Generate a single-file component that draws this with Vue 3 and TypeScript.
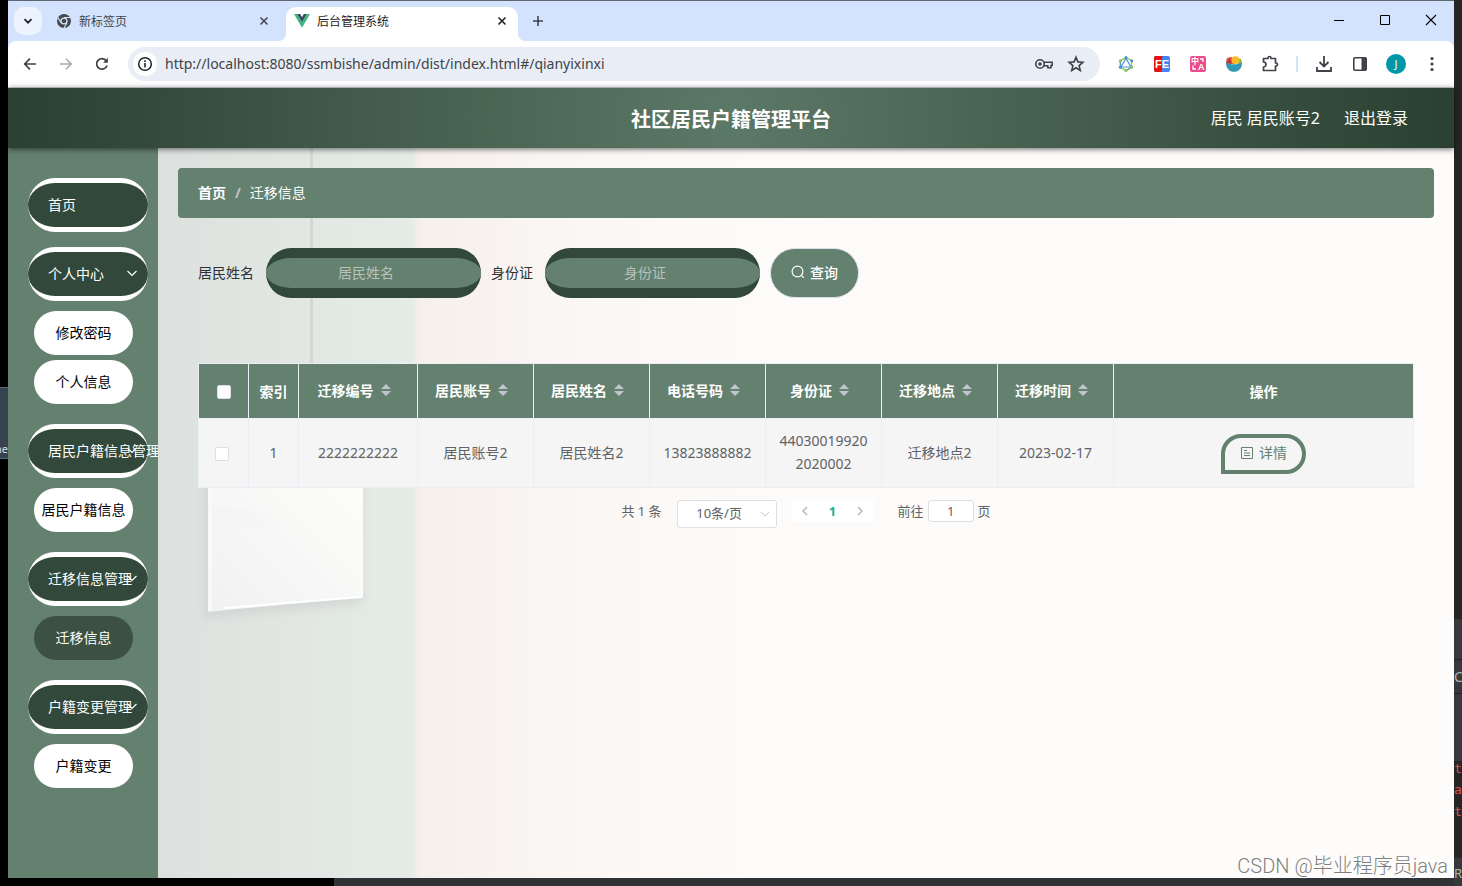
<script setup lang="ts">
import { ref } from 'vue'

interface MenuGroup {
  title: string
  children: string[]
}

interface Column {
  key: string
  label: string
}

const groups: MenuGroup[] = [
  { title: '个人中心', children: ['修改密码', '个人信息'] },
  { title: '居民户籍信息管理', children: ['居民户籍信息'] },
  { title: '迁移信息管理', children: ['迁移信息'] },
  { title: '户籍变更管理', children: ['户籍变更'] },
]
const active = ref('迁移信息')

const columns: Column[] = [
  { key: 'code', label: '迁移编号' },
  { key: 'account', label: '居民账号' },
  { key: 'name', label: '居民姓名' },
  { key: 'phone', label: '电话号码' },
  { key: 'idCard', label: '身份证' },
  { key: 'place', label: '迁移地点' },
  { key: 'date', label: '迁移时间' },
]

const rows: Record<string, string>[] = [
  {
    code: '2222222222',
    account: '居民账号2',
    name: '居民姓名2',
    phone: '13823888882',
    idCard: '440300199202020002',
    place: '迁移地点2',
    date: '2023-02-17',
  },
]

const url = ref('http://localhost:8080/ssmbishe/admin/dist/index.html#/qianyixinxi')
const nameQuery = ref('')
const idQuery = ref('')
const page = ref('1')
</script>

<template>
  <div class="desktop">
    <div class="behind-left" aria-hidden="true"><span class="peek">ne</span></div>

    <div class="window">
      <div class="tabstrip">
        <button class="tab-search" aria-label="搜索标签页">
          <svg width="10" height="10" viewBox="0 0 10 10"><path d="M1.500 3.200 5 6.700l3.500-3.500" fill="none" stroke="#1f2328" stroke-width="1.800" /></svg>
        </button>
        <div class="tab">
          <svg width="16" height="16" viewBox="0 0 16 16">
            <circle cx="8" cy="8" r="7" fill="#45494d" />
            <circle cx="8" cy="8" r="3.600" fill="#d3e3fd" />
            <circle cx="8" cy="8" r="2.300" fill="#45494d" />
            <path d="M8 4.500h6.200M5 9.800 1.900 4.600M11 9.700 8 15" stroke="#d3e3fd" stroke-width="1.100" />
          </svg>
          <span class="tab-title">新标签页</span>
          <button class="tab-close" aria-label="关闭">
            <svg width="10" height="10" viewBox="0 0 10 10"><path d="m1.500 1.500 7 7m0-7-7 7" stroke="#3f4347" stroke-width="1.500" /></svg>
          </button>
        </div>
        <div class="tab current">
          <svg width="16" height="16" viewBox="0 0 16 16">
            <path d="M0 1h3.200L8 9.300 12.800 1H16L8 14.800z" fill="#41b883" />
            <path d="M3.200 1H6.200L8 4.200 9.800 1h3L8 9.300z" fill="#35495e" />
          </svg>
          <span class="tab-title">后台管理系统</span>
          <button class="tab-close" aria-label="关闭">
            <svg width="10" height="10" viewBox="0 0 10 10"><path d="m1.500 1.500 7 7m0-7-7 7" stroke="#1f2328" stroke-width="1.600" /></svg>
          </button>
        </div>
        <button class="new-tab" aria-label="新标签页">
          <svg width="12" height="12" viewBox="0 0 12 12"><path d="M6 1v10M1 6h10" stroke="#3f4347" stroke-width="1.600" /></svg>
        </button>
        <div class="win-controls">
          <button aria-label="最小化"><svg width="12" height="12" viewBox="0 0 12 12"><path d="M1 6.500h10" stroke="#000" /></svg></button>
          <button aria-label="最大化"><svg width="12" height="12" viewBox="0 0 12 12"><path d="M1.500 1.500h9v9h-9z" fill="none" stroke="#000" /></svg></button>
          <button aria-label="关闭窗口"><svg width="12" height="12" viewBox="0 0 12 12"><path d="m1 1 10 10M11 1 1 11" stroke="#000" stroke-width="1.100" /></svg></button>
        </div>
      </div>

      <div class="toolbar">
        <button class="tool" aria-label="后退"><svg width="16" height="16" viewBox="0 0 16 16"><path d="M14 8H3M8 2.700 2.700 8 8 13.300" fill="none" stroke="#3f4347" stroke-width="1.700" /></svg></button>
        <button class="tool" aria-label="前进"><svg width="16" height="16" viewBox="0 0 16 16"><path d="M2 8h11M8 2.700 13.300 8 8 13.300" fill="none" stroke="#a6a9ac" stroke-width="1.500" /></svg></button>
        <button class="tool" aria-label="重新加载"><svg width="16" height="16" viewBox="0 0 16 16"><path d="M13 9.400A5.300 5.300 0 1 1 11.900 4.400L13 5.500" fill="none" stroke="#3f4347" stroke-width="1.700" /><path d="M13.900 1.800v5H9z" fill="#3f4347" /></svg></button>
        <div class="omnibox">
          <span class="site-info"><svg width="16" height="16" viewBox="0 0 16 16"><circle cx="8" cy="8" r="6.300" fill="none" stroke="#1f2328" stroke-width="1.500" /><path d="M8 7v4.500M8 4.300v1.600" stroke="#1f2328" stroke-width="1.600" /></svg></span>
          <input v-model="url" class="url" aria-label="地址" type="text" />
          <button class="omni-btn" aria-label="密码">
            <svg width="18" height="12" viewBox="0 0 18 12"><circle cx="5" cy="6" r="4.200" fill="none" stroke="#3f4347" stroke-width="1.600" /><circle cx="5" cy="6" r="1.800" fill="#3f4347" /><path d="M9 4.200h8.200v3.300H16v2.300h-3.200V7.700H9" fill="none" stroke="#3f4347" stroke-width="1.500" /></svg>
          </button>
          <button class="omni-btn" aria-label="收藏">
            <svg width="18" height="18" viewBox="0 0 18 18"><path d="m9 2.200 1.900 4.700 5 .4-3.800 3.300 1.200 4.900L9 12.800l-4.300 2.700 1.200-4.900-3.800-3.300 5-.4z" fill="none" stroke="#3f4347" stroke-width="1.600" /></svg>
          </button>
        </div>
        <div class="extensions">
          <button class="tool" aria-label="GraphQL">
            <svg width="16" height="16" viewBox="0 0 16 16"><path d="m8 1.500 5.700 3.200v6.600L8 14.500l-5.700-3.200V4.700z" fill="none" stroke="#8cc152" stroke-width="1.200" /><path d="m8 2.500 5 8.500H3z" fill="none" stroke="#4a90d9" stroke-width="1.200" /><path d="M2.300 4.700v6.600M8 14.500l5.700-3.200" stroke="#4a90d9" /><g fill="#4a90d9"><circle cx="8" cy="1.600" r="1.500" /><circle cx="13.700" cy="4.700" r="1.500" /><circle cx="2.300" cy="11.300" r="1.500" /></g><g fill="#8cc152"><circle cx="2.300" cy="4.700" r="1.500" /><circle cx="13.700" cy="11.300" r="1.500" /><circle cx="8" cy="14.400" r="1.500" /></g></svg>
          </button>
          <button class="tool" aria-label="FeHelper">
            <svg width="16" height="16" viewBox="0 0 16 16"><rect width="16" height="16" rx="2" fill="#4285f4" /><path d="M2 0h6.500l-1.200 6 1.200 4-1 6H2a2 2 0 0 1-2-2V2a2 2 0 0 1 2-2z" fill="#eb1010" /><text x="8" y="12" text-anchor="middle" font-family="Liberation Sans" font-weight="700" font-size="11" fill="#fff">FE</text></svg>
          </button>
          <button class="tool" aria-label="翻译">
            <svg width="16" height="16" viewBox="0 0 16 16"><rect width="16" height="16" rx="2" fill="#ea4c89" /><text x="1" y="8" font-family="Noto Sans CJK SC" font-weight="700" font-size="8" fill="#fff">中</text><text x="8" y="14" font-family="Liberation Sans" font-weight="700" font-size="9" fill="#fff">A</text><path d="M10 3h3v3M3 9.500v3.500h3" fill="none" stroke="#fff" stroke-width="1.300" /></svg>
          </button>
          <button class="tool" aria-label="扩展">
            <svg width="16" height="16" viewBox="0 0 16 16"><path d="M0 6.500.800 2.500 4 1l5 1v6H1z" fill="#d9483b" /><path d="m3 4 2 2M1.500 5.500l2 1" stroke="#7a2d3a" /><path d="M12 2.500 15 3l1 4-4 1.500z" fill="#7cb342" /><circle cx="9.500" cy="4.300" r="4" fill="#fbc02d" /><path d="M8 2.500h.5M10.500 4.500h.5M8.500 6h.5M11.500 2.500h.5" stroke="#f28c28" stroke-width="1.500" /><path d="M0 6.500c3 2.400 13 2.400 16 0 .3 5-3 9.300-8 9.300S-.3 11.500 0 6.500z" fill="#2e9ab5" /></svg>
          </button>
          <button class="tool" aria-label="扩展程序">
            <svg width="18" height="18" viewBox="0 0 18 18"><path d="M2.500 3.500H7V3a1.500 1.500 0 0 1 3 0v.5h4.500V8h.5a1.500 1.500 0 0 1 0 3h-.5v4.500h-12V12a2.500 2.500 0 0 0 0-5z" fill="none" stroke="#3f4347" stroke-width="1.700" stroke-linejoin="round" /></svg>
          </button>
        </div>
        <span class="divider"></span>
        <button class="tool" aria-label="下载"><svg width="16" height="16" viewBox="0 0 16 16"><path d="M8 0v10M3.500 6 8 10.400 12.500 6M1 11v4h14v-4" fill="none" stroke="#3f4347" stroke-width="1.800" /></svg></button>
        <button class="tool" aria-label="侧边栏"><svg width="16" height="16" viewBox="0 0 16 16"><rect x="1.800" y="1.800" width="12.400" height="12.400" rx="1" fill="none" stroke="#3f4347" stroke-width="1.600" /><path d="M9.500 2H14v12H9.500z" fill="#3f4347" /></svg></button>
        <button class="tool" aria-label="用户"><span class="avatar">J</span></button>
        <button class="tool" aria-label="更多"><svg width="4" height="16" viewBox="0 0 4 16" fill="#3f4347"><circle cx="2" cy="2.500" r="1.600" /><circle cx="2" cy="8" r="1.600" /><circle cx="2" cy="13.500" r="1.600" /></svg></button>
      </div>

      <div class="app">
        <header class="app-header">
          <h1>社区居民户籍管理平台</h1>
          <div class="account">
            <span>居民 居民账号2</span>
            <a href="#">退出登录</a>
          </div>
        </header>

        <div class="app-body">
          <nav class="sidebar">
            <button class="group">首页</button>
            <section v-for="g in groups" :key="g.title" class="menu">
              <button class="group">
                {{ g.title }}
                <svg class="arrow" width="12" height="12" viewBox="0 0 12 12"><path d="m1.500 4 4.500 4.500L10.500 4" fill="none" stroke="#fff" stroke-width="1.200" /></svg>
              </button>
              <div class="children">
                <button v-for="c in g.children" :key="c" class="child" :class="{ active: c === active }" @click="active = c">{{ c }}</button>
              </div>
            </section>
          </nav>

          <main class="main">
            <svg class="scene" width="300" height="500" viewBox="0 0 300 500" aria-hidden="true">
              <defs>
                <linearGradient id="panel" x1="0" y1="1" x2="1" y2="0"><stop offset="0" stop-color="#f0f1f0" /><stop offset="0.600" stop-color="#f9f9f8" /><stop offset="1" stop-color="#fdfdfb" /></linearGradient>
                <filter id="soft" x="-20%" y="-20%" width="140%" height="140%"><feGaussianBlur stdDeviation="5" /></filter>
              </defs>
              <path d="M152 0h3v300h-3z" fill="#d4d7d4" />
              <path d="M46 320 204 318V456L46 470z" fill="#c9cecb" opacity="0.600" filter="url(#soft)" />
              <path d="M50 310h155v139L50 464z" fill="url(#panel)" />
              <path d="M52 310v153" stroke="#fafafa" stroke-width="3" />
              <path d="m66 460 138-11" stroke="#fff" stroke-width="2" />
              <path d="M204 310v139" stroke="#fcfcfc" stroke-width="2" />
              <path d="M56 363c26 0 40 8 60 20" fill="none" stroke="#e9eaea" stroke-width="4" opacity="0.500" filter="url(#soft)" />
            </svg>

            <div class="breadcrumb">
              <a href="#">首页</a><span class="slash">/</span><span>迁移信息</span>
            </div>

            <div class="content">
              <form class="search" @submit.prevent>
                <label for="q-name">居民姓名</label>
                <input id="q-name" v-model="nameQuery" type="text" placeholder="居民姓名" />
                <label for="q-id">身份证</label>
                <input id="q-id" v-model="idQuery" type="text" placeholder="身份证" />
                <button type="submit">
                  <svg width="14" height="14" viewBox="0 0 14 14"><circle cx="6.500" cy="6.500" r="5.400" fill="none" stroke="#fff" stroke-width="1.200" /><path d="m10.400 10.400 2.400 2.400" stroke="#fff" stroke-width="1.200" /></svg>
                  查询
                </button>
              </form>

              <table>
                <colgroup>
                  <col class="c-small" />
                  <col class="c-small" />
                  <col class="c-code" />
                  <col v-for="n in 6" :key="n" />
                  <col class="c-action" />
                </colgroup>
                <thead>
                  <tr>
                    <th><input type="checkbox" class="head-check" aria-label="全选" /></th>
                    <th>索引</th>
                    <th v-for="c in columns" :key="c.key">
                      <span class="sortable">{{ c.label }}
                        <svg width="10" height="12" viewBox="0 0 10 12" fill="#c0c4cc"><path d="M0 5 5 0l5 5zM0 7h10l-5 5z" /></svg>
                      </span>
                    </th>
                    <th>操作</th>
                  </tr>
                </thead>
                <tbody>
                  <tr v-for="(r, i) in rows" :key="i">
                    <td class="cell-control"><input type="checkbox" class="row-check" aria-label="选择" /></td>
                    <td>{{ i + 1 }}</td>
                    <td v-for="c in columns" :key="c.key">{{ r[c.key] }}</td>
                    <td class="cell-control">
                      <button class="detail">
                        <svg width="14" height="14" viewBox="0 0 14 14" fill="none" stroke="#64806f"><path d="M1.500 1.500h11v11h-11zM4 4.500h3M4 7h6M4 9.500h6" /></svg>
                        详情
                      </button>
                    </td>
                  </tr>
                </tbody>
              </table>

              <div class="pagination">
                <span>共 1 条</span>
                <div class="size">
                  <select aria-label="每页条数"><option>10条/页</option></select>
                  <svg width="10" height="10" viewBox="0 0 10 10"><path d="m1 3 4 4 4-4" fill="none" stroke="#c0c4cc" /></svg>
                </div>
                <div class="pager">
                  <button aria-label="上一页"><svg width="8" height="10" viewBox="0 0 8 10"><path d="M6 1 2 5l4 4" fill="none" stroke="#b4b8c0" stroke-width="1.500" /></svg></button>
                  <button class="num">1</button>
                  <button aria-label="下一页"><svg width="8" height="10" viewBox="0 0 8 10"><path d="m2 1 4 4-4 4" fill="none" stroke="#b4b8c0" stroke-width="1.500" /></svg></button>
                </div>
                <label class="jump">前往 <input v-model="page" type="text" /> 页</label>
              </div>
            </div>
          </main>
        </div>
      </div>
      <div class="watermark">CSDN @毕业程序员java</div>
    </div>

    <div class="behind-right" aria-hidden="true">
      <div class="r-top"></div>
      <div class="r-bar"></div>
      <div class="r-tool">C</div>
      <div class="r-bar tall"></div>
      <div class="r-log"><span>tt</span><span>ar</span><span>tt</span></div>
      <div class="r-foot">R</div>
    </div>
    <div class="behind-bottom" aria-hidden="true"></div>
  </div>
</template>

<style>
body {
  margin: 0;
}
</style>

<style scoped>
* {
  box-sizing: border-box;
}

.desktop {
  display: grid;
  grid-template-columns: 8px minmax(0, 1fr) 8px;
  grid-template-rows: minmax(0, 1fr) 8px;
  min-height: 100vh;
  background: #000;
  font-family: "Noto Sans", "Noto Sans CJK SC", sans-serif;
  font-size: 14px;
}

button,
input,
select {
  font: inherit;
  margin: 0;
  padding: 0;
  border: 0;
  background: none;
}

svg {
  display: block;
  flex: none;
}

.behind-left {
  overflow: hidden;
  padding-top: 387px;
}

.peek {
  display: block;
  width: 14px;
  height: 72px;
  margin-left: -5px;
  padding-top: 53px;
  border-top: 1px solid #5b6b7c;
  border-bottom: 1px solid #5b6b7c;
  background: #36424f;
  color: #d8dce0;
  font-size: 11px;
  line-height: 15px;
}

.behind-right {
  grid-column: 3;
  grid-row: 1 / 3;
  display: flex;
  flex-direction: column;
  overflow: hidden;
  background: #262626;
  color: #b0b4b6;
  line-height: 20px;
}

.r-top {
  height: 619px;
}

.r-bar {
  height: 40px;
  background: #35393b;
}

.r-bar.tall {
  height: 67px;
}

.r-tool {
  height: 35px;
  border-top: 1px solid #222;
  border-bottom: 1px solid #222;
  background: #35393b;
  line-height: 34px;
}

.r-log {
  display: flex;
  flex: 1;
  flex-direction: column;
  color: #d9534f;
  font-family: "DejaVu Sans Mono", monospace;
  font-size: 13px;
  line-height: 22px;
}

.r-log span:first-child {
  margin-bottom: 2px;
  line-height: 16px;
}

.r-foot {
  height: 28px;
  background: #35393b;
  line-height: 30px;
  font-size: 13px;
}

.behind-bottom {
  grid-column: 1 / 3;
  grid-row: 2;
  background: linear-gradient(to right, #000 334px, #303335 334px);
}

.window {
  position: relative;
  display: flex;
  flex-direction: column;
  min-width: 0;
  border-top: 1px solid #5f6672;
  background: #d3e3fd;
}

.tabstrip {
  display: flex;
  height: 40px;
  align-items: flex-start;
  padding: 6px 0 0 6px;
}

.tab-search {
  display: grid;
  place-items: center;
  width: 28px;
  height: 28px;
  border-radius: 10px;
  background: #ecf3fe;
}

.tab {
  display: flex;
  align-items: center;
  width: 232px;
  height: 34px;
  padding: 0 10px 6px 8px;
  font-size: 12px;
  color: #3f4347;
}

.tab:not(.current) {
  margin: 0 0 0 6px;
}

.tab.current {
  position: relative;
  margin-left: 6px;
  border-radius: 10px 10px 0 0;
  background: #fff;
  color: #1f2328;
}

.tab.current::before,
.tab.current::after {
  content: "";
  position: absolute;
  bottom: 0;
  width: 8px;
  height: 8px;
}

.tab.current::before {
  right: 100%;
  background: radial-gradient(circle at 0 0, transparent 8px, #fff 8px);
}

.tab.current::after {
  left: 100%;
  background: radial-gradient(circle at 100% 0, transparent 8px, #fff 8px);
}

.tab-title {
  flex: 1;
  margin-left: 7px;
}

.tab-close {
  display: grid;
  place-items: center;
  width: 12px;
  height: 16px;
}

.new-tab {
  display: grid;
  place-items: center;
  width: 40px;
  height: 28px;
}

.win-controls {
  display: flex;
  margin-left: auto;
}

.win-controls button {
  display: grid;
  place-items: center;
  width: 46px;
  height: 26px;
}

.toolbar {
  display: flex;
  align-items: center;
  height: 47px;
  padding: 0 4px;
  border-bottom: 1px solid #d5d8dc;
  border-radius: 8px 8px 0 0;
  background: #fff;
}

.tool {
  display: grid;
  place-items: center;
  width: 36px;
  height: 34px;
  flex: none;
}

.omnibox {
  display: flex;
  flex: 1;
  align-items: center;
  min-width: 0;
  height: 34px;
  margin: 0 8px;
  padding: 0 8px 0 5px;
  border-radius: 17px;
  background: #e9eef6;
}

.site-info {
  display: grid;
  place-items: center;
  width: 24px;
  height: 24px;
  border-radius: 12px;
  background: #fff;
}

.url {
  flex: 1;
  min-width: 0;
  margin-left: 8px;
  padding-bottom: 2px;
  color: #3f4347;
  outline: 0;
}

.omni-btn {
  display: grid;
  place-items: center;
  width: 32px;
  height: 28px;
}

.extensions {
  display: flex;
}

.divider {
  width: 2px;
  height: 16px;
  margin: 0 8px;
  background: #d3e3fd;
}

.avatar {
  width: 20px;
  height: 20px;
  border-radius: 10px;
  background: #0097a7;
  color: #fff;
  font-size: 11px;
  line-height: 20px;
  text-align: center;
}

.app {
  display: flex;
  flex: 1;
  flex-direction: column;
}

.app-header {
  position: relative;
  z-index: 1;
  display: grid;
  grid-template-columns: 1fr auto 1fr;
  align-items: center;
  height: 60px;
  padding: 0 46px;
  background: radial-gradient(circle, #5c7866, #2a4030);
  box-shadow: 0 1px 6px rgba(0, 0, 0, 0.600);
  color: #fff;
}

h1 {
  grid-column: 2;
  margin: 0;
  padding-top: 4px;
  font-size: 20px;
  line-height: 28px;
}

.account {
  display: flex;
  justify-content: flex-end;
  gap: 24px;
  padding-bottom: 2px;
  font-size: 16px;
}

.account a {
  color: #fff;
  text-decoration: none;
}

.app-body {
  display: flex;
  flex: 1;
}

.sidebar {
  width: 150px;
  flex: none;
  overflow: hidden;
  padding: 30px 10px 20px 20px;
  background: #64806f;
}

.group {
  position: relative;
  display: block;
  width: 120px;
  height: 54px;
  padding: 0 0 2px 20px;
  border: 0 solid #fff;
  border-width: 5px 0;
  border-radius: 30px;
  background: #31483a;
  color: #fff;
  text-align: left;
  white-space: nowrap;
}

.arrow {
  position: absolute;
  top: 15px;
  right: 10px;
}

.menu {
  margin-top: 20px;
}

.group + .menu {
  margin-top: 15px;
}

.children {
  display: flex;
  flex-direction: column;
  gap: 5px;
  padding: 10px 15px 0 6px;
}

.child {
  height: 44px;
  padding-bottom: 2px;
  border-radius: 22px;
  background: #fff;
  color: #000;
  white-space: nowrap;
}

.child.active {
  background: #3c5141;
  color: #fff;
}

.main {
  position: relative;
  flex: 1;
  min-width: 0;
  padding: 20px;
  background:
    linear-gradient(to right, #dce1df, #e1e6e2 120px, #e5ece7 254px, #f6f0ec 261px, #faf6f3 400px, #fdfbf9 600px, #fdfcfa);
}

.scene {
  position: absolute;
  top: 0;
  left: 0;
}

.breadcrumb {
  position: relative;
  display: flex;
  align-items: center;
  height: 50px;
  padding: 0 20px 2px;
  border-radius: 4px;
  background: #64806f;
  color: #fff;
}

.breadcrumb a {
  color: #fff;
  font-weight: 700;
  text-decoration: none;
}

.slash {
  margin: 0 9px;
  color: #c0c4cc;
  font-weight: 700;
}

.content {
  position: relative;
  padding: 30px 20px 0;
}

.search {
  display: flex;
  align-items: center;
  height: 50px;
  margin-bottom: 65px;
  color: #303133;
}

.search label {
  padding-bottom: 2px;
}

.search input {
  width: 215px;
  height: 50px;
  margin: 0 10px 0 12px;
  padding: 0 30px 2px 15px;
  border: 0 solid #31483a;
  border-width: 10px 0;
  border-radius: 25px;
  background: #64806f;
  color: #fff;
  text-align: center;
}

.search input::placeholder {
  color: #b7c2bb;
  opacity: 1;
}

.search button {
  display: flex;
  align-items: center;
  gap: 5px;
  height: 50px;
  padding: 0 20px 2px;
  border: 1px solid #dcdfe6;
  border-radius: 25px;
  background: #64806f;
  color: #fff;
  font-weight: 500;
}

table {
  width: 100%;
  table-layout: fixed;
  border-collapse: collapse;
  background: #f5f5f5;
  color: #606266;
  text-align: center;
}

.c-small {
  width: 50px;
}

.c-code {
  width: 119px;
}

.c-action {
  width: 300px;
}

th {
  height: 55px;
  padding: 0;
  border: 1px solid #ebeef5;
  background: #64806f;
  color: #fff;
}

td {
  height: 69px;
  padding: 0 10px 2px;
  border: 1px solid #ebeef5;
  line-height: 23px;
  word-break: break-all;
}

td.cell-control {
  padding: 1px 10px 0;
}

td.cell-control:first-child {
  padding-right: 14px;
}

.sortable {
  display: inline-flex;
  align-items: center;
  gap: 7px;
  padding: 0 8px 2px 0;
}

.head-check,
.row-check {
  display: block;
  width: 14px;
  height: 14px;
  margin: 0 auto;
  border: 1px solid #dcdfe6;
  border-radius: 2px;
  background: #fff;
  appearance: none;
}

.head-check {
  margin-top: 2px;
}

.detail {
  display: flex;
  align-items: center;
  gap: 5px;
  height: 40px;
  margin: 0 auto;
  padding: 0 15px 2px;
  border: 4px solid #64806f;
  border-radius: 20px 20px 20px 0;
  color: #64806f;
}

.pagination {
  display: flex;
  justify-content: center;
  align-items: flex-start;
  padding-top: 12px;
  color: #606266;
  font-size: 13px;
  line-height: 22px;
}

.size {
  position: relative;
  margin: 0 15px;
}

.size select {
  width: 100px;
  height: 28px;
  padding: 0 20px 2px 5px;
  border: 1px solid #dcdfe6;
  border-radius: 3px;
  background: #fff;
  color: #606266;
  text-align: center;
  text-align-last: center;
  appearance: none;
}

.size svg {
  position: absolute;
  top: 9px;
  right: 7px;
}

.pager {
  display: flex;
  width: 82px;
  height: 22px;
  margin-right: 24px;
  background: #fff;
}

.pager button {
  display: grid;
  flex: 1;
  place-items: center;
}

.pager .num {
  color: #18b88a;
  font-weight: 700;
}

.jump {
  display: flex;
  gap: 4px;
}

.jump input {
  width: 46px;
  height: 22px;
  border: 1px solid #dcdfe6;
  border-radius: 3px;
  background: #fff;
  color: #606266;
  text-align: center;
}

.watermark {
  position: absolute;
  z-index: 2;
  right: 6px;
  bottom: 0;
  color: #7c7e7e;
  font-family: Roboto, "Noto Sans CJK SC", sans-serif;
  font-size: 20px;
  font-weight: 300;
  line-height: 24px;
  text-shadow: 0 1px 1px #fff;
}
</style>
